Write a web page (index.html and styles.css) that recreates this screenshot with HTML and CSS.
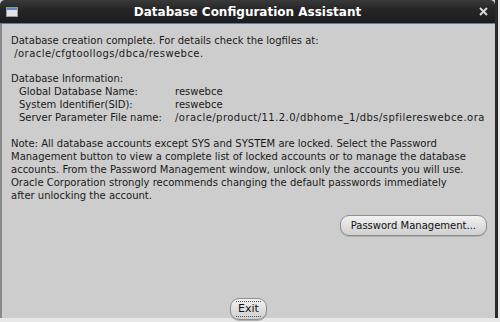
FILE: index.html
```html
<!DOCTYPE html>
<html lang="en">
<head>
    <meta charset="UTF-8">
    <title>Database Configuration Assistant</title>
    <link rel="stylesheet" href="styles.css">
</head>
<body>
    <div class="window">
        <div class="titlebar">
            <svg class="win-icon" width="12" height="10" viewBox="0 0 12 10">
                <rect x="0.5" y="0.5" width="11" height="9" fill="#e4e4e4" stroke="#9a9a9a"/>
                <rect x="1" y="1" width="10" height="2" fill="#5b86c8"/>
            </svg>
            <div class="title">Database Configuration Assistant</div>
            <svg class="close" width="9" height="9" viewBox="0 0 9 9">
                <path d="M1 1 L8 8 M8 1 L1 8" stroke="#d8d8d8" stroke-width="2"/>
            </svg>
        </div>
        <div class="content">
            <p class="para">Database creation complete. For details check the logfiles at:<br>&nbsp;<span class="path">/oracle/cfgtoollogs/dbca/reswebce.</span></p>

            <div class="info">
                <div class="info-head">Database Information:</div>
                <div class="info-row"><span class="label">Global Database Name:</span><span>reswebce</span></div>
                <div class="info-row"><span class="label">System Identifier(SID):</span><span>reswebce</span></div>
                <div class="info-row"><span class="label">Server Parameter File name:</span><span class="path">/oracle/product/11.2.0/dbhome_1/dbs/spfilereswebce.ora</span></div>
            </div>

            <p class="para">Note: All database accounts except SYS and SYSTEM are locked. Select the Password<br>Management button to view a complete list of locked accounts or to manage the database<br>accounts. From the Password Management window, unlock only the accounts you will use.<br>Oracle Corporation strongly recommends changing the default passwords immediately<br>after unlocking the account.</p>

            <div class="pw-row">
                <button class="btn">Password Management...</button>
            </div>

            <div class="exit-row">
                <button class="btn exit"><span class="focus">Exit</span></button>
            </div>
        </div>
    </div>
</body>
</html>
```

FILE: styles.css
```css
body {
    margin: 0;
    height: 322px;
    overflow: hidden;
    background: #e8e8e8;
    font-family: "DejaVu Sans", sans-serif;
}
.window {
    width: 495px;
    height: 318px;
    display: flex;
    flex-direction: column;
    border-right: 3px solid #2a2a2a;
    background: #cdcdcd;
}
.titlebar {
    height: 23px;
    display: flex;
    align-items: center;
    background: linear-gradient(#3a3a3a, #262626 40%, #1c1c1c);
    border-radius: 5px 5px 0 0;
    border-bottom: 1px solid #5d7ea8;
    padding: 0 7px 0 6px;
    color: #fff;
}
.win-icon {
    flex: none;
}
.title {
    flex: 1;
    text-align: center;
    font-weight: bold;
    font-size: 12px;
    margin-right: 2px;
}
.close {
    flex: none;
}
.content {
    flex: 1;
    border-left: 2px solid #8a8a8a;
    padding: 10px 0 0 9px;
    font-size: 10px;
    line-height: 13px;
    color: #1a1a1a;
    display: flex;
    flex-direction: column;
}
.para {
    margin: 0 0 12px;
}
.path {
    letter-spacing: 0.45px;
}
.info {
    margin-bottom: 13px;
}
.info-row {
    display: flex;
    padding-left: 8px;
}
.label {
    width: 156px;
}
.pw-row {
    display: flex;
    justify-content: flex-end;
    padding-right: 8px;
    margin-top: 1px;
}
.btn {
    font-family: "DejaVu Sans", sans-serif;
    font-size: 10px;
    color: #111;
    background: linear-gradient(#f2f2f2, #dedede 55%, #cfcfcf);
    border: 1px solid #8c8c8c;
    border-radius: 9px;
    padding: 0 10px;
    height: 21px;
    box-shadow: 0 1px 0 #b0b0b0;
}
.exit-row {
    margin-top: auto;
    display: flex;
    justify-content: center;
    padding-right: 9px;
}
.exit {
    padding: 0 5px;
    height: 22px;
    margin-bottom: -2px;
    font-size: 11px;
}
.focus {
    display: inline-block;
    border-top: 1px dotted #555;
    border-bottom: 1px dotted #555;
    padding: 1px 2px;
    line-height: 12px;
}
```
